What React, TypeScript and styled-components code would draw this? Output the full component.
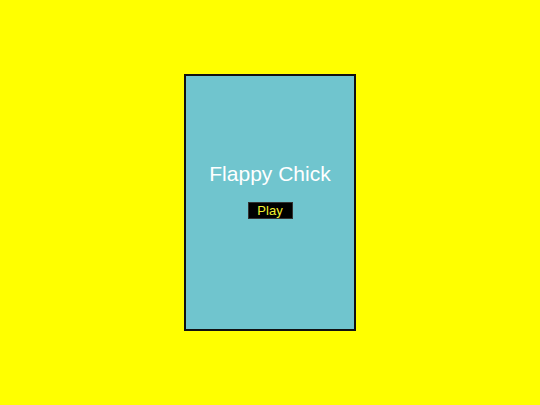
import React from "react";
import styled, { createGlobalStyle } from "styled-components";

const Global = createGlobalStyle`
  html, body { margin: 0; padding: 0; background: #ffff00; }
  body { font-family: "Liberation Sans", Arial, sans-serif; }
`;

const Page = styled.div`
  width: 540px;
  height: 405px;
  display: flex;
  align-items: center;
  justify-content: center;
`;

const Screen = styled.div`
  box-sizing: border-box;
  width: 172px;
  height: 257px;
  background: #70c5ce;
  border: 2px solid #111;
  display: flex;
  flex-direction: column;
  align-items: center;
  padding-top: 86px;
`;

const Title = styled.div`
  color: #ffffff;
  font-size: 21px;
  line-height: 24px;
`;

const PlayButton = styled.button`
  margin-top: 16px;
  width: 45px;
  height: 17px;
  padding: 0;
  border: 1px solid #333;
  background: #000;
  color: #f0f030;
  font-family: "Liberation Sans", Arial, sans-serif;
  font-size: 13px;
  line-height: 15px;
  cursor: pointer;
`;

export default function App() {
  return (
    <>
      <Global />
      <Page>
        <Screen>
          <Title>Flappy Chick</Title>
          <PlayButton>Play</PlayButton>
        </Screen>
      </Page>
    </>
  );
}
